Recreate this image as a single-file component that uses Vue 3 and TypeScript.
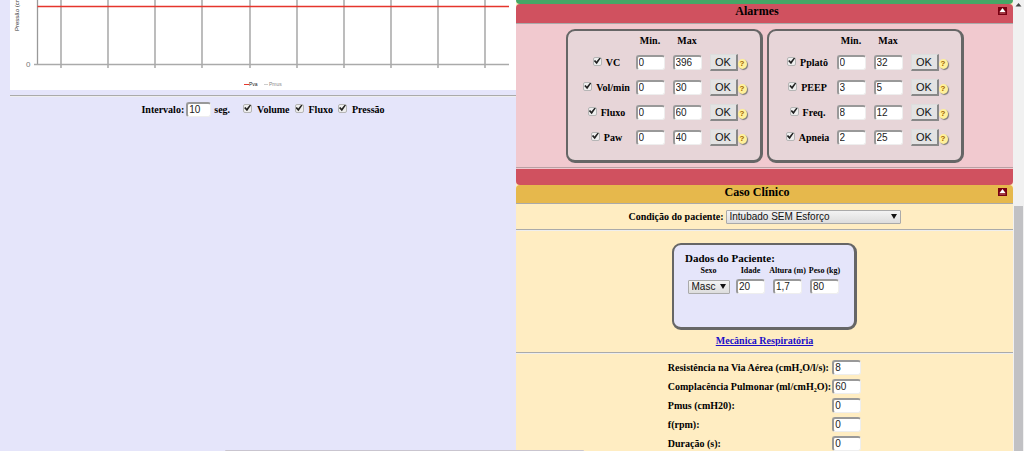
<script setup lang="ts">
import { ref, reactive } from 'vue'

interface Alarm {
  id: string
  label: string
  enabled: boolean
  min: number
  max: number
}

interface Toggle {
  id: string
  label: string
  on: boolean
}

const alarmPanels = reactive<Alarm[][]>([
  [
    { id: 'vc', label: 'VC', enabled: true, min: 0, max: 396 },
    { id: 'volmin', label: 'Vol/min', enabled: true, min: 0, max: 30 },
    { id: 'fluxo', label: 'Fluxo', enabled: true, min: 0, max: 60 },
    { id: 'paw', label: 'Paw', enabled: true, min: 0, max: 40 },
  ],
  [
    { id: 'pplato', label: 'Pplatô', enabled: true, min: 0, max: 32 },
    { id: 'peep', label: 'PEEP', enabled: true, min: 3, max: 5 },
    { id: 'freq', label: 'Freq.', enabled: true, min: 8, max: 12 },
    { id: 'apneia', label: 'Apneia', enabled: true, min: 2, max: 25 },
  ],
])

const toggles = reactive<Toggle[]>([
  { id: 'volume', label: 'Volume', on: true },
  { id: 'flow', label: 'Fluxo', on: true },
  { id: 'pressure', label: 'Pressão', on: true },
])

const interval = ref('10')
const condition = ref('sem')
const patient = reactive({ sex: 'm', age: '20', height: '1,7', weight: '80' })

const mechanics = reactive([
  { id: 'res', label: 'Resistência na Via Aérea (cmH₂O/l/s):', value: '8' },
  { id: 'comp', label: 'Complacência Pulmonar (ml/cmH₂O):', value: '60' },
  { id: 'pmus', label: 'Pmus (cmH20):', value: '0' },
  { id: 'rpm', label: 'f(rpm):', value: '0' },
  { id: 'dur', label: 'Duração (s):', value: '0' },
])

const gridLines = [51, 98, 145, 192, 240, 287, 334, 381, 428, 475]
</script>

<template>
  <div class="page">
    <main class="monitor">
      <svg class="chart" viewBox="0 0 506 90" role="img" aria-label="Pressão">
        <rect width="506" height="90" fill="#fff" />
        <g stroke="#999" stroke-width="1.3">
          <path d="M27.5 0V64.5" />
          <path v-for="x in gridLines" :key="x" :d="`M${x} 0V68`" />
        </g>
        <path d="M24 64.5H499" stroke="#aaa" stroke-width="1.4" />
        <path d="M27.5 6.5H499" stroke="#e5352c" stroke-width="1.5" />
        <text class="axis" transform="translate(9 31) rotate(-90)">Pressão (cm</text>
        <text class="zero" x="16" y="67">0</text>
        <path d="M234 84.5h5" stroke="#e5352c" />
        <text class="legend" x="239" y="86">Pva</text>
        <path d="M254 84.5h4" stroke="#ccc" />
        <text class="legend muted" x="259" y="86">Pmus</text>
      </svg>
      <hr class="rule" />
      <form class="controls" @submit.prevent>
        <label for="interval">Intervalo:</label>
        <input id="interval" v-model="interval" class="field" type="text" />
        <span class="unit">seg.</span>
        <template v-for="t in toggles" :key="t.id">
          <input :id="t.id" v-model="t.on" class="check" type="checkbox" />
          <label :for="t.id">{{ t.label }}</label>
        </template>
      </form>
    </main>

    <aside class="side">
      <div class="green-end"></div>

      <section class="alarms">
        <header class="bar red">
          <h2>Alarmes</h2>
          <button class="fold" type="button" aria-label="Recolher alarmes">
            <svg viewBox="0 0 9 8"><path d="M4.5 1L7.5 5H1.5Z" fill="#fff" /><path d="M1.5 6h6" stroke="#c77" /></svg>
          </button>
        </header>
        <div class="alarm-body">
          <div v-for="(panel, p) in alarmPanels" :key="p" class="panel alarm-panel">
            <div class="alarm-row heads">
              <span></span><span>Min.</span><span>Max</span>
            </div>
            <div v-for="a in panel" :key="a.id" class="alarm-row">
              <div class="alarm-name">
                <input :id="a.id" v-model="a.enabled" class="check" type="checkbox" />
                <label :for="a.id">{{ a.label }}</label>
              </div>
              <input v-model="a.min" class="field number" type="number" :aria-label="`${a.label} mínimo`" />
              <input v-model="a.max" class="field number" type="number" :aria-label="`${a.label} máximo`" />
              <button class="ok" type="button">OK</button>
              <button class="help" type="button" :aria-label="`Ajuda ${a.label}`">?</button>
            </div>
          </div>
        </div>
        <div class="red-end"></div>
      </section>

      <section class="case">
        <header class="bar gold">
          <h2>Caso Clínico</h2>
          <button class="fold" type="button" aria-label="Recolher caso clínico">
            <svg viewBox="0 0 9 8"><path d="M4.5 1L7.5 5H1.5Z" fill="#fff" /><path d="M1.5 6h6" stroke="#c77" /></svg>
          </button>
        </header>
        <div class="condition">
          <label for="condition">Condição do paciente:</label>
          <span class="pick wide">
            <select id="condition" v-model="condition">
              <option value="sem">Intubado SEM Esforço</option>
              <option value="com">Intubado COM Esforço</option>
            </select>
          </span>
        </div>
        <hr class="rule" />
        <div class="panel patient">
          <h3>Dados do Paciente:</h3>
          <div class="patient-grid">
            <label for="sex">Sexo</label>
            <label for="age">Idade</label>
            <label for="height">Altura (m)</label>
            <label for="weight">Peso (kg)</label>
            <span class="pick">
              <select id="sex" v-model="patient.sex">
                <option value="m">Masc</option>
                <option value="f">Fem</option>
              </select>
            </span>
            <input id="age" v-model="patient.age" class="field" type="text" />
            <input id="height" v-model="patient.height" class="field" type="text" />
            <input id="weight" v-model="patient.weight" class="field" type="text" />
          </div>
        </div>
        <a class="mechanics-link" href="#mecanica">Mecânica Respiratória</a>
        <hr class="rule" />
        <div id="mecanica" class="mechanics">
          <template v-for="m in mechanics" :key="m.id">
            <label :for="m.id">{{ m.label }}</label>
            <input :id="m.id" v-model="m.value" class="field" type="text" />
          </template>
        </div>
      </section>
    </aside>

    <div class="scrollbar" aria-hidden="true">
      <svg class="arrow" viewBox="0 0 11 10"><path d="M5.5 3L8.5 6.5H2.5Z" fill="#444" /></svg>
      <div class="thumb"></div>
    </div>
    <div class="status-edge"></div>
  </div>
</template>

<style>
body {
  background: #e5e5fa;
  overflow: hidden;
}
</style>

<style scoped>
* {
  box-sizing: border-box;
}
.page {
  position: relative;
  display: grid;
  grid-template-columns: 516fr 497fr 11fr;
  height: 100vh;
  overflow: hidden;
  font: bold 10px/14px "Liberation Serif", serif;
  color: #000;
}
.monitor {
  min-width: 0;
  padding-left: 10px;
}
.chart {
  display: block;
  width: 100%;
}
.axis {
  font: 6px "Liberation Sans", sans-serif;
  fill: #333;
}
.zero {
  font: 8px "Liberation Sans", sans-serif;
  fill: #777;
}
.legend {
  font: 5px "Liberation Sans", sans-serif;
  fill: #222;
}
.muted {
  fill: #888;
}
.rule {
  height: 2px;
  margin: 0;
  border: 0;
  border-top: 1px solid #aaa;
  border-bottom: 1px solid #eee;
}
.monitor .rule {
  margin-top: 5px;
}
.controls {
  display: flex;
  align-items: center;
  justify-content: center;
  margin-top: 5px;
}
.controls .field {
  width: 25px;
  margin: 0 3px 0 2px;
}
.controls .check {
  margin: 0 5px 3px;
}
.unit {
  margin-right: 8px;
}
.field {
  width: 29px;
  height: 15px;
  margin: 0;
  padding: 0 0 1px 1px;
  border: 1px solid #eee;
  border-top: 2px solid #999;
  border-left: 2px solid #999;
  border-radius: 3px;
  background: #fff;
  color: #222;
  font: 10px/11px "Liberation Sans", sans-serif;
}
.number::-webkit-inner-spin-button {
  appearance: none;
  width: 9px;
  margin: 0;
}
.check {
  appearance: none;
  flex: none;
  width: 9px;
  height: 9px;
  margin: 0;
  border: 1px solid #b5b5b5;
  border-radius: 2px;
  background: #eee;
}
.check:checked::before {
  content: "";
  display: block;
  width: 7px;
  height: 7px;
  background: #222;
  clip-path: polygon(0 50%, 20% 35%, 38% 58%, 85% 0, 100% 12%, 42% 95%);
}
.side {
  min-width: 0;
  background: #ffedc2;
}
.green-end {
  height: 4px;
  border-radius: 0 0 4px 4px;
  background: #44a766;
}
.bar {
  display: flex;
  align-items: flex-start;
  height: 20px;
  padding-right: 6px;
  border-bottom: 1px solid #aaa;
}
.bar h2 {
  flex: 1;
  margin: 0;
  font-size: 12px;
  line-height: 15px;
  text-align: center;
}
.red {
  background: #d0515f;
  border-radius: 4px 4px 0 0;
}
.gold {
  height: 19px;
  background: #e6b84c;
  border-radius: 4px 4px 0 0;
}
.fold {
  width: 9px;
  height: 8px;
  margin-top: 3px;
  padding: 0;
  border: 0;
  background: #780012;
}
.fold svg {
  display: block;
}
.alarm-body {
  display: flex;
  justify-content: center;
  gap: 4px;
  padding: 5px 0 4px;
  background: #f1c9cf;
  border-bottom: 1px solid #b9a1a4;
}
.panel {
  border: 2px solid #666;
  border-right-width: 3px;
  border-bottom-width: 3px;
  border-radius: 9px;
}
.alarm-panel {
  width: 197px;
  height: 134px;
  padding-left: 10px;
  background: #e7d5d8;
}
.alarm-row {
  display: grid;
  grid-template-columns: 50px 29px 29px 28px 10px;
  column-gap: 8px;
  align-items: center;
  height: 25px;
}
.heads {
  height: 19px;
  text-align: center;
}
.alarm-name {
  display: flex;
  align-items: center;
  justify-content: center;
  gap: 4px;
  margin-right: -8px;
}
.alarm-name .check {
  margin-bottom: 3px;
}
.ok {
  width: 28px;
  height: 17px;
  padding: 0;
  border: 1px solid #ddd;
  border-right: 2px solid #888;
  border-bottom: 2px solid #888;
  background: #e3e3e3;
  color: #111;
  font: 11px/13px "Liberation Sans", sans-serif;
}
.help {
  width: 9px;
  height: 10px;
  margin: 2px 0 0 -8px;
  padding: 0;
  border: 0;
  border-radius: 50%;
  background: #fff09a;
  box-shadow: 1px 1px 1px #777;
  color: #a06000;
  font: bold 8px/10px "Liberation Sans", sans-serif;
}
.red-end {
  height: 17px;
  border-top: 1px solid #f1c9cf;
  background: #d0515f;
  border-radius: 0 0 4px 4px;
}
.case {
  display: flex;
  flex-direction: column;
  align-items: center;
}
.case .bar,
.case .rule {
  width: 100%;
}
.condition {
  display: flex;
  align-items: center;
  gap: 2px;
  height: 25px;
}
.pick {
  position: relative;
  display: inline-block;
  width: 42px;
  height: 14px;
}
.wide {
  width: 175px;
}
.pick select {
  appearance: none;
  display: block;
  width: 100%;
  height: 100%;
  margin: 0;
  padding: 0 3px;
  border: 1px solid #aaa;
  border-radius: 1px;
  background: linear-gradient(#f3f3f3, #ddd);
  color: #111;
  font: 10px/12px "Liberation Sans", sans-serif;
}
.pick::after {
  content: "";
  position: absolute;
  top: 4px;
  right: 4px;
  border: 3px solid transparent;
  border-top: 5px solid #111;
  border-bottom: 0;
  pointer-events: none;
}
.patient {
  width: 185px;
  height: 87px;
  margin-top: 12px;
  padding: 6px 0 0 11px;
  background: #e5e5fa;
}
.patient h3 {
  margin: 0;
  font-size: 11px;
  line-height: 15px;
}
.patient-grid {
  display: grid;
  grid-template-columns: 47px 37px 37px 37px;
  row-gap: 3px;
  justify-items: center;
  align-items: center;
  font-size: 8px;
  line-height: 10px;
  white-space: nowrap;
}
.mechanics-link {
  margin: 3px 0 4px;
  color: #1a0dc8;
  line-height: 15px;
}
.mechanics {
  display: grid;
  grid-template-columns: max-content 29px;
  column-gap: 1px;
  row-gap: 4px;
  margin-top: 6px;
  align-items: center;
  white-space: nowrap;
}
.scrollbar {
  background: #f1f1f1;
}
.arrow {
  display: block;
  width: 100%;
}
.thumb {
  height: 100%;
  margin: 196px 1px 0;
  background: #c1c1c4;
}
.status-edge {
  position: absolute;
  bottom: 0;
  left: 22%;
  width: 35%;
  height: 1px;
  border-radius: 3px 3px 0 0;
  background: #c9c5cf;
}
</style>
